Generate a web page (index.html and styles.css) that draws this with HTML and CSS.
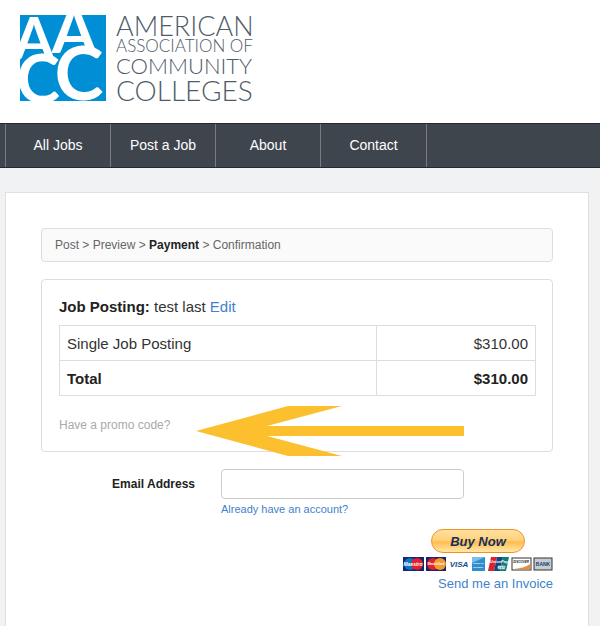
FILE: index.html
```html
<!DOCTYPE html>
<html lang="en">
<head>
    <meta charset="UTF-8">
    <meta name="viewport" content="width=device-width, initial-scale=1.0">
    <title>AACC Jobs - Payment</title>
    <link rel="stylesheet" href="styles.css">
</head>
<body>
    <header class="header">
        <svg class="logo-mark" viewBox="0 0 86 86" aria-label="AACC">
            <rect width="86" height="86" fill="#008fd5"/>
            <g class="logo-letters">
                <text x="14" y="44" font-size="58">A</text>
                <text x="54" y="38" font-size="64">A</text>
                <text x="18" y="88" font-size="66">C</text>
                <text x="59" y="85" font-size="74">C</text>
            </g>
        </svg>
        <div class="logo-text">
            <span class="line-american">AMERICAN</span>
            <span class="line-association">ASSOCIATION OF</span>
            <span class="line-community">COMMUNITY</span>
            <span class="line-colleges">COLLEGES</span>
        </div>
    </header>

    <nav class="nav">
        <a href="#">All Jobs</a>
        <a href="#">Post a Job</a>
        <a href="#">About</a>
        <a href="#">Contact</a>
    </nav>

    <main class="container">
        <div class="steps">Post &gt; Preview &gt; <strong>Payment</strong> &gt; Confirmation</div>

        <section class="order">
            <h2><strong>Job Posting:</strong> test last <a href="#">Edit</a></h2>
            <table class="order-table">
                <tr>
                    <td>Single Job Posting</td>
                    <td class="price">$310.00</td>
                </tr>
                <tr class="total">
                    <td>Total</td>
                    <td class="price">$310.00</td>
                </tr>
            </table>
            <a class="promo" href="#">Have a promo code?</a>
            <svg class="arrow" viewBox="0 0 268 50" aria-hidden="true">
                <path d="M0 25 92 0H146L71 20H268V30H71L146 50H92Z" fill="#fcc02f"/>
            </svg>
        </section>

        <form id="paymentForm">
            <div class="form-row">
                <label for="email">Email Address</label>
                <div class="field">
                    <input type="email" id="email">
                    <a href="#">Already have an account?</a>
                </div>
            </div>

            <div class="pay">
                <div class="pay-buttons">
                    <button type="submit" class="buy-now">Buy Now</button>
                    <svg class="cards" viewBox="0 0 150 14" aria-hidden="true">
                        <rect width="21" height="14" fill="#16266f"/>
                        <circle cx="7" cy="7" r="6" fill="#0b78c5"/>
                        <circle cx="14" cy="7" r="6" fill="#e5202b"/>
                        <text x="10" y="9" font-size="5" fill="#fff">Maestro</text>

                        <rect x="23" width="20" height="14" fill="#16266f"/>
                        <circle cx="30" cy="7" r="6" fill="#e5202b"/>
                        <circle cx="37" cy="7" r="6" fill="#f79b2c"/>
                        <text x="33" y="8" font-size="3" fill="#fff">MasterCard</text>

                        <text x="56" y="10" font-size="8" fill="#1a4b8f">VISA</text>

                        <rect x="69" width="13" height="14" fill="#2f8fce"/>
                        <path d="M69 0H82L69 6Z" fill="#7cc0e6"/>
                        <text x="75" y="7" font-size="2" fill="#fff">AMERICAN</text>
                        <text x="75" y="11" font-size="2" fill="#fff">EXPRESS</text>

                        <path d="M88 0H94L91 14H85Z" fill="#d9232e"/>
                        <path d="M94 0H100L97 14H91Z" fill="#12467b"/>
                        <path d="M100 0H106L103 14H97Z" fill="#0b7e80"/>
                        <text x="96" y="6" font-size="4" fill="#fff">UnionPay</text>
                        <text x="98" y="12" font-size="4" fill="#fff">银联</text>

                        <rect x="109" y="1" width="19" height="12" fill="#fff" stroke="#333"/>
                        <path d="M111 12Q122 11 127 7V12Z" fill="#f38b2d"/>
                        <text x="118" y="6" font-size="3" fill="#222">DISCOVER</text>

                        <rect x="131" y="1" width="18" height="12" fill="#c6ccd2" stroke="#333"/>
                        <text class="upright" x="140" y="9" font-size="5" fill="#153f70">BANK</text>
                    </svg>
                </div>
                <a href="#">Send me an Invoice</a>
            </div>
        </form>
    </main>
</body>
</html>
```

FILE: styles.css
```css
* {
    box-sizing: border-box;
}
body {
    margin: 0;
    font-family: "Liberation Sans", Arial, sans-serif;
    font-size: 12px;
    color: #333;
    background-color: #f1f2f4;
}
a {
    color: #3f82cc;
    text-decoration: none;
}
.header {
    display: flex;
    gap: 10px;
    padding: 15px 20px 20px;
    background-color: white;
}
.logo-mark {
    width: 86px;
    height: 86px;
}
.logo-letters {
    font-family: Lato, sans-serif;
    font-weight: bold;
    text-anchor: middle;
    fill: white;
}
.logo-text {
    display: flex;
    flex-direction: column;
    height: 88px;
    font-family: Lato, sans-serif;
    font-weight: 300;
    color: #4f5b67;
    white-space: nowrap;
}
.line-american {
    font-size: 27px;
    line-height: 22px;
}
.line-association {
    font-size: 17px;
    line-height: 18px;
}
.line-community {
    font-size: 22px;
    line-height: 21px;
}
.line-colleges {
    font-size: 28px;
    line-height: 28px;
}
.nav {
    display: flex;
    height: 45px;
    padding-left: 5px;
    background-color: #3e454d;
    border-top: 1px solid #23292f;
    border-bottom: 1px solid #23292f;
}
.nav a {
    width: 105px;
    font-size: 14px;
    line-height: 42px;
    text-align: center;
    color: white;
    border-left: 1px solid #777c82;
}
.nav a:last-child {
    width: 107px;
    border-right: 1px solid #777c82;
}
.container {
    margin: 24px 11px 0 5px;
    padding: 35px 35px 20px;
    min-height: 434px;
    background-color: white;
    border: 1px solid #dfe0e2;
    border-bottom: none;
}
.steps {
    padding: 0 13px;
    line-height: 32px;
    color: #666;
    background-color: #fafafa;
    border: 1px solid #ddd;
    border-radius: 4px;
}
.steps strong {
    color: #222;
}
.order {
    position: relative;
    margin-top: 17px;
    padding: 17px 16px 17px 17px;
    border: 1px solid #ddd;
    border-radius: 4px;
}
h2 {
    margin: 0 0 8px;
    font-size: 15px;
    line-height: 20px;
    font-weight: normal;
}
h2 strong {
    color: #222;
}
.order-table {
    width: 100%;
    border-collapse: collapse;
    font-size: 15px;
}
.order-table td {
    height: 35px;
    padding: 0 7px;
    border: 1px solid #ddd;
}
.order-table .price {
    width: 159px;
    text-align: right;
}
.total {
    font-weight: bold;
    color: #222;
}
.promo {
    display: block;
    margin-top: 20px;
    line-height: 18px;
    color: #aaa;
}
/* arrow lies over the box border */
.arrow {
    position: absolute;
    left: 154px;
    bottom: -5px;
    width: 268px;
    height: 50px;
}
.form-row {
    display: flex;
    gap: 26px;
    margin-top: 17px;
}
.form-row label {
    width: 154px;
    line-height: 30px;
    text-align: right;
    font-weight: bold;
    color: #222;
}
.field {
    display: flex;
    flex-direction: column;
    width: 243px;
}
.field input {
    height: 30px;
    padding: 4px 8px;
    border: 1px solid #ccc;
    border-radius: 4px;
}
.field a {
    font-size: 11px;
    line-height: 20px;
}
.pay {
    display: flex;
    flex-direction: column;
    align-items: flex-end;
    margin-top: 10px;
}
.pay-buttons {
    display: flex;
    flex-direction: column;
    align-items: center;
    gap: 4px;
}
.buy-now {
    width: 94px;
    height: 24px;
    padding: 0;
    font-family: "Liberation Sans", Arial, sans-serif;
    font-size: 13px;
    font-weight: bold;
    font-style: italic;
    color: #122d60;
    background: linear-gradient(#ffe0a0, #ffd27a 45%, #ffbc50 55%, #ffe9a8);
    border: 1px solid #f0922a;
    border-radius: 12px;
    cursor: pointer;
}
.cards {
    width: 150px;
    height: 14px;
    font-family: "Liberation Sans", "Noto Sans CJK SC", sans-serif;
    font-weight: bold;
    font-style: italic;
    text-anchor: middle;
}
.cards .upright {
    font-style: normal;
}
.pay > a {
    font-size: 13px;
    line-height: 25px;
}
```
